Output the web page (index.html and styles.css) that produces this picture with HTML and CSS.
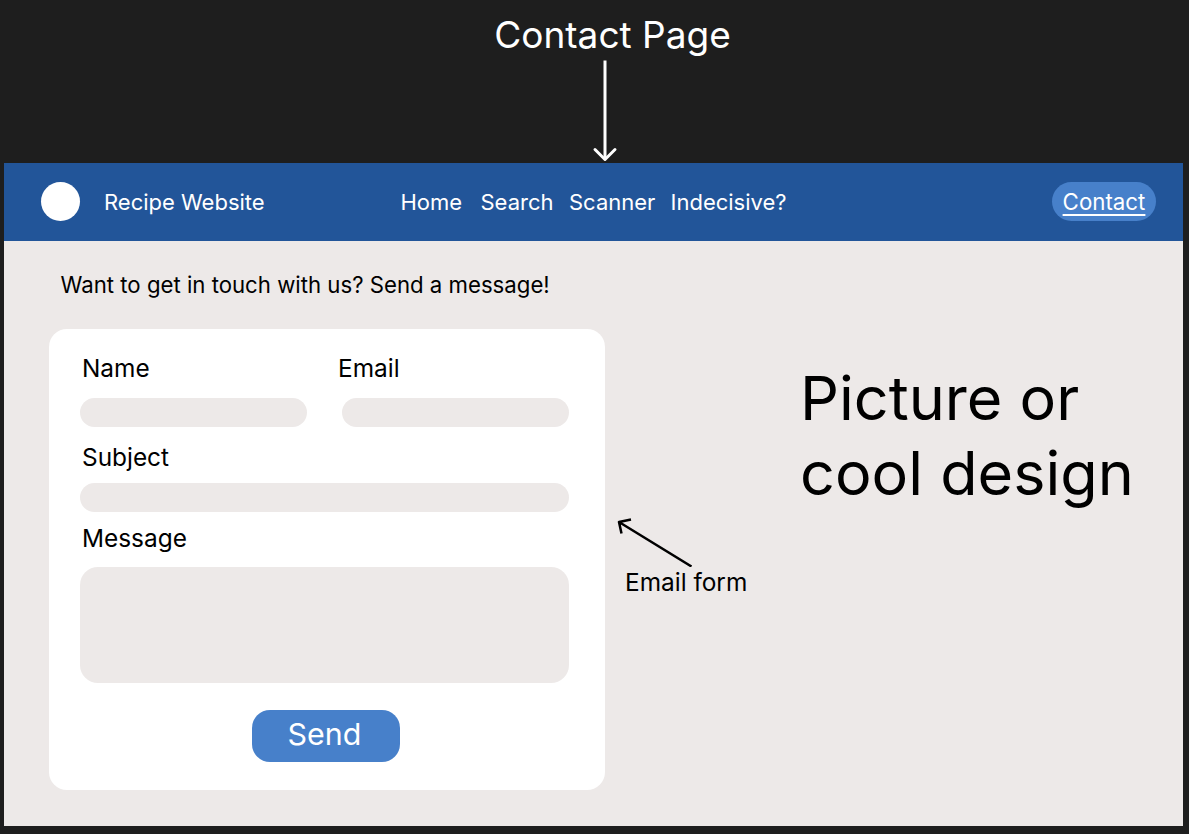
FILE: index.html
```
<!DOCTYPE html>
<html lang="en">
<head>
<meta charset="utf-8">
<title>Contact Page</title>
<link rel="stylesheet" href="styles.css">
</head>
<body>
<header class="board-label">
  <h1 class="board-title">Contact Page</h1>
  <svg class="down-arrow" width="26" height="104" viewBox="0 0 26 104"><path class="shaft" d="M13 1.500V100"/><path d="M3 90.500L13 100.500L23 90.500"/></svg>
</header>
<main class="page">
  <nav class="nav">
    <span class="logo"></span>
    <span class="brand">Recipe Website</span>
    <div class="links"><a class="home">Home</a><a class="search">Search</a><a class="scanner">Scanner</a><a class="indecisive">Indecisive?</a></div>
    <a class="contact"><span class="contact-text">Contact</span></a>
  </nav>
  <p class="intro">Want to get in touch with us? Send a message!</p>
  <div class="content">
    <form class="card">
      <div class="pair">
        <div class="field"><label class="label">Name</label><div class="input"></div></div>
        <div class="field"><label class="label label-email">Email</label><div class="input"></div></div>
      </div>
      <div class="field subject"><label class="label">Subject</label><div class="input"></div></div>
      <div class="field message"><label class="label">Message</label><div class="input area"></div></div>
      <button class="send" type="button"><span class="send-text">Send</span></button>
    </form>
    <aside class="note">
      <svg class="note-arrow" width="80" height="51" viewBox="0 0 80 51"><path d="M76.500 50.500L4 6M16 3.500L4 6L6.500 17.500"/></svg>
      <span class="note-text">Email form</span>
    </aside>
    <h2 class="picture">Picture or<br>cool design</h2>
  </div>
</main>
</body>
</html>
```
FILE: styles.css
```
* { box-sizing: border-box; }
body { margin: 0; height: 834px; overflow: hidden; background: #1e1e1e; font-family: Inter, sans-serif; color: #000; }
.board-label { height: 163px; padding: 12px 0 0 16px; display: flex; flex-direction: column; align-items: center; color: #fff; width: 1209px; }
.board-title { margin: 0; font-size: 37px; line-height: 45px; font-weight: 400; white-space: nowrap; }
.down-arrow { margin: 1.500px 16px 0 0; flex: none; fill: none; stroke: #fff; stroke-width: 3; stroke-linecap: round; stroke-linejoin: round; }
.shaft { stroke-linecap: butt; }
.page { width: 1179px; height: 663px; margin-left: 4px; background: #ede9e8; }
.nav { height: 78px; background: #225599; color: #fff; display: flex; align-items: center; padding: 0 27px 1px 37px; font-size: 22px; line-height: 28px; white-space: nowrap; }
.logo { width: 39px; height: 39px; border-radius: 50%; background: #fff; }
.brand { width: 296.500px; margin-left: 24px; }
.links { display: flex; }
.home { width: 80px; }
.search { width: 88.500px; }
.scanner { width: 101.500px; }
.contact { margin-left: auto; width: 104px; height: 39px; border-radius: 19.500px; background: #4780ca; display: flex; align-items: center; justify-content: center; font-size: 22.300px; }
.contact-text { text-decoration: underline; text-decoration-thickness: 1.500px; text-underline-offset: 4px; text-decoration-skip-ink: none; }
.intro { margin: 0; padding: 30px 0 0 56.500px; height: 88px; font-size: 22.200px; line-height: 28px; }
.content { display: flex; padding-left: 45px; }
.card { width: 556px; height: 460.500px; border-radius: 18px; background: #fff; padding: 24px 35.600px 0 31.400px; display: flex; flex-direction: column; }
.pair { display: flex; justify-content: space-between; }
.pair .field { width: 227px; }
.label { display: block; padding-left: 1.600px; font-size: 24.400px; line-height: 30px; }
.label-email { margin-left: -6px; }
.input { height: 29.500px; margin-top: 14.500px; border-radius: 15px; background: #ede9e8; }
.subject { margin-top: 15px; }
.subject .input { margin-top: 10.500px; }
.message { margin-top: 11px; }
.message .area { height: 116px; margin-top: 14px; border-radius: 18px; }
.send { align-self: center; margin: 27px 0 0 2px; width: 148px; height: 52px; border: 0; border-radius: 18px; padding: 0; background: #4780ca; color: #fff; font: 400 30.400px/48px Inter, sans-serif; }
.send-text { display: block; margin-top: -5px; padding-right: 3px; }
.note { display: flex; flex-direction: column; width: 132px; margin: 186.500px 0 0 9.500px; font-size: 24.400px; line-height: 30px; white-space: nowrap; }
.note-arrow { flex: none; fill: none; stroke: #000; stroke-width: 2.500; stroke-linejoin: round; }
.note-text { padding-left: 10.500px; }
.picture { margin: 32px 0 0 53.500px; font-size: 61.100px; line-height: 75px; font-weight: 400; white-space: nowrap; }
```
